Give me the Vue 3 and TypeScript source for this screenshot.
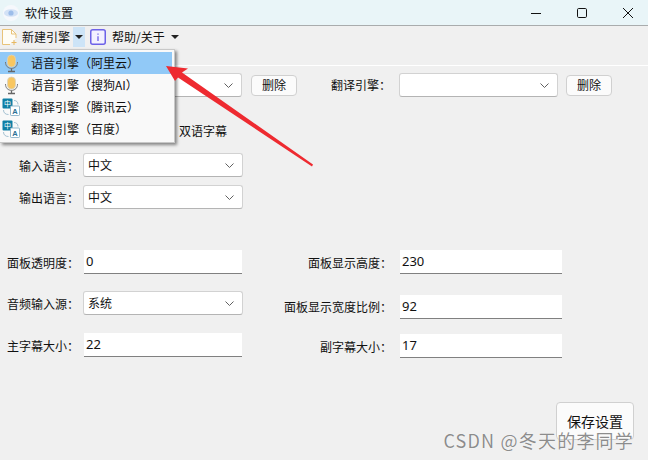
<script setup lang="ts">
const menu = [
  { text: '语音引擎（阿里云）', icon: 'mic', active: true },
  { text: '语音引擎（搜狗AI）', icon: 'mic', active: false },
  { text: '翻译引擎（腾讯云）', icon: 'tr', active: false },
  { text: '翻译引擎（百度）', icon: 'tr', active: false },
]
const leftRows = [
  { label: '面板透明度：', value: '0', type: 'input', cls: 'l1' },
  { label: '音频输入源：', value: '系统', type: 'select', cls: 'l2' },
  { label: '主字幕大小：', value: '22', type: 'input', cls: 'l3' },
]
const rightRows = [
  { label: '面板显示高度：', value: '230', cls: 'r1' },
  { label: '面板显示宽度比例：', value: '92', cls: 'r2' },
  { label: '副字幕大小：', value: '17', cls: 'r3' },
]
</script>

<template>
  <div class="window">
    <header class="titlebar">
      <svg class="appicon" width="18" height="18" viewBox="0 0 18 18">
        <circle cx="9" cy="9" r="8" fill="#f6f8fc" />
        <ellipse cx="9" cy="9" rx="7" ry="3.8" fill="#d3e2f6" />
        <circle cx="9" cy="9" r="2.6" fill="#9dbdea" />
      </svg>
      <span class="title">软件设置</span>
      <div class="controls">
        <svg width="12" height="12" viewBox="0 0 12 12"><path d="M1 6.5H11" stroke="#111" stroke-width="1" fill="none" /></svg>
        <svg width="12" height="12" viewBox="0 0 12 12"><rect x="1.5" y="1.5" width="9" height="9" rx="1.2" stroke="#111" stroke-width="1" fill="none" /></svg>
        <svg width="12" height="12" viewBox="0 0 12 12"><path d="M1 1L11 11M11 1L1 11" stroke="#111" stroke-width="1" fill="none" /></svg>
      </div>
    </header>

    <nav class="toolbar">
      <svg class="newicon" width="17" height="18" viewBox="0 0 17 18">
        <path d="M9 16.5H1.5V1.5H10.5L15 6V10" fill="#fffdf6" stroke="#e8c37a" stroke-width="1" />
        <path d="M10.5 1.5V6H15" fill="none" stroke="#e8c37a" stroke-width="1" />
        <path d="M13 12V17M10.5 14.5H15.5" stroke="#e8b860" stroke-width="1" fill="none" />
      </svg>
      <span class="tool-text new">新建引擎</span>
      <span class="drop active"><i class="caret"></i></span>
      <svg class="infoicon" width="16" height="16" viewBox="0 0 16 16">
        <rect x="0.75" y="0.75" width="14.5" height="14.5" rx="2" fill="#f3f1ff" stroke="#6d62e8" stroke-width="1.5" />
        <path d="M8 4.5V5.8M8 7.2V12" stroke="#6d62e8" stroke-width="1.3" fill="none" />
      </svg>
      <span class="tool-text help">帮助/关于</span>
      <i class="caret help-caret"></i>
    </nav>
    <div class="rule"></div>

    <main class="content">
      <section class="engines">
        <div class="select engine-sel"><span></span><svg class="chev" width="9" height="5" viewBox="0 0 9 5"><path d="M0.5 0.5L4.5 4.5L8.5 0.5" fill="none" stroke="#606060" /></svg></div>
        <button class="btn del del-a">删除</button>
        <label class="engine-label">翻译引擎：</label>
        <div class="select engine-sel"><span></span><svg class="chev" width="9" height="5" viewBox="0 0 9 5"><path d="M0.5 0.5L4.5 4.5L8.5 0.5" fill="none" stroke="#606060" /></svg></div>
        <button class="btn del">删除</button>
      </section>

      <div class="dual">双语字幕</div>

      <section class="langs">
        <div class="row">
          <label class="lbl">输入语言：</label>
          <div class="select"><span>中文</span><svg class="chev" width="9" height="5" viewBox="0 0 9 5"><path d="M0.5 0.5L4.5 4.5L8.5 0.5" fill="none" stroke="#606060" /></svg></div>
        </div>
        <div class="row">
          <label class="lbl">输出语言：</label>
          <div class="select"><span>中文</span><svg class="chev" width="9" height="5" viewBox="0 0 9 5"><path d="M0.5 0.5L4.5 4.5L8.5 0.5" fill="none" stroke="#606060" /></svg></div>
        </div>
      </section>

      <section class="panel">
        <div class="col left">
          <div v-for="r in leftRows" :key="r.label" class="row" :class="r.cls">
            <label class="lbl">{{ r.label }}</label>
            <div v-if="r.type === 'select'" class="select"><span>{{ r.value }}</span><svg class="chev" width="9" height="5" viewBox="0 0 9 5"><path d="M0.5 0.5L4.5 4.5L8.5 0.5" fill="none" stroke="#606060" /></svg></div>
            <div v-else class="input">{{ r.value }}</div>
          </div>
        </div>
        <div class="col right">
          <div v-for="r in rightRows" :key="r.label" class="row" :class="r.cls">
            <label class="lbl wide">{{ r.label }}</label>
            <div class="input">{{ r.value }}</div>
          </div>
        </div>
      </section>

      <div class="footer">
        <button class="btn save">保存设置</button>
      </div>
    </main>

    <ul class="menu">
      <li v-for="m in menu" :key="m.text" class="item" :class="{ on: m.active }">
        <svg v-if="m.icon === 'mic'" class="mi mic" width="16" height="20" viewBox="0 0 16 20">
          <rect x="3.5" y="2" width="8" height="12" rx="4" fill="#f8c660" stroke="#d9d2bd" stroke-width="0.8" />
          <path d="M1.5 9C1.5 13 4 15.4 7.5 15.4C11 15.4 13.5 13 13.5 9" fill="none" stroke="#777" stroke-width="1" />
          <path d="M7.5 15.4V18M4 18.5H11" stroke="#666" stroke-width="1.3" fill="none" />
        </svg>
        <svg v-else class="mi" width="18" height="18" viewBox="0 0 18 18">
          <rect x="0.5" y="0.5" width="10" height="10" rx="1" fill="#0f7fa5" />
          <text x="5.5" y="8.3" font-size="7" fill="#fff" text-anchor="middle" font-family="Noto Sans CJK SC">中</text>
          <rect x="8.5" y="8" width="9" height="9.5" rx="0.8" fill="#fff" stroke="#7aa7c0" stroke-width="0.8" />
          <text x="13" y="15.5" font-size="7.5" fill="#2b6f95" text-anchor="middle" font-family="Liberation Sans" font-weight="700">A</text>
          <path d="M12 2.5C14.5 2.5 16 4 16 6.5M1.5 12C1.5 15 3.5 16.5 6.5 16.5" fill="none" stroke="#8fb3c8" stroke-width="0.8" />
        </svg>
        <span class="item-text">{{ m.text }}</span>
      </li>
    </ul>

    <svg class="arrow" width="648" height="460" viewBox="0 0 648 460">
      <path d="M166 66L188 68.5L182 72.5L313 164.5L312 166.5L178 77.5L175 81Z" fill="#ee2a30" />
    </svg>

    <div class="watermark">CSDN @冬天的李同学</div>
  </div>
</template>

<style scoped>
.window {
  position: relative;
  width: 648px;
  height: 460px;
  overflow: hidden;
  background: #f0f0f0;
  color: #111;
  font-family: "Noto Sans CJK SC", "Noto Sans", sans-serif;
  font-size: 12px;
  line-height: 16px;
}
.titlebar {
  display: flex;
  align-items: center;
  height: 25px;
  padding-left: 2px;
  background: #e9f5f8;
  border-bottom: 1px solid #a9acad;
}
.title { margin-left: 5px; }
.controls {
  display: flex;
  gap: 34px;
  margin-left: auto;
  margin-right: 14px;
}
.toolbar {
  display: flex;
  align-items: center;
  height: 39px;
  padding: 1px 0 18px 1px;
  box-sizing: border-box;
  background: #f0f0f0;
}
.tool-text { font-size: 12px; }
.new { margin-left: 4px; }
.drop {
  display: flex;
  align-items: center;
  justify-content: center;
  width: 12px;
  height: 20px;
  margin-left: 3px;
}
.active { background: #cde4f7; }
.caret {
  display: block;
  width: 0;
  height: 0;
  border-left: 4px solid transparent;
  border-right: 4px solid transparent;
  border-top: 4px solid #222;
}
.infoicon { margin-left: 5px; }
.help { margin-left: 6px; }
.help-caret { margin-left: 6px; }
.rule {
  height: 1px;
  background: #fff;
}
.content {
  display: flex;
  flex-direction: column;
  padding-top: 7px;
}
.engines {
  display: flex;
  align-items: center;
  height: 24px;
  padding-left: 83px;
}
.select {
  display: flex;
  align-items: center;
  justify-content: space-between;
  box-sizing: border-box;
  width: 160px;
  height: 24px;
  padding: 0 8px 0 4px;
  background: #fff;
  border: 1px solid #d2d2d2;
  border-bottom-color: #b4b4b4;
  border-radius: 3px;
}
.engine-sel { width: 159px; }
.btn {
  box-sizing: border-box;
  padding: 0;
  background: #fbfbfb;
  border: 1px solid #d0d0d0;
  border-radius: 4px;
  color: #111;
  font-family: inherit;
}
.del {
  width: 46px;
  height: 21px;
  margin-left: 8px;
  font-size: 12px;
  line-height: 16px;
}
.del-a { margin-left: 9px; }
.engine-label {
  width: 60px;
  margin-left: 34px;
  margin-right: 8px;
  white-space: nowrap;
}
.dual {
  height: 16px;
  margin-top: 26px;
  margin-left: 179px;
}
.langs {
  display: flex;
  flex-direction: column;
  gap: 8px;
  margin-top: 14px;
}
.row {
  display: flex;
  align-items: center;
}
.lbl {
  flex: none;
  width: 79px;
  margin-right: 4px;
  padding-top: 2px;
  text-align: right;
  white-space: nowrap;
}
.wide { width: 112px; margin-right: 8px; }
.r2 .lbl { padding-top: 0; }
.panel {
  display: flex;
  margin-top: 41px;
}
.col {
  display: flex;
  flex-direction: column;
}
.left { width: 280px; }
.l2 { margin-top: 17px; }
.l3 { margin-top: 18px; }
.r2 { margin-top: 21px; }
.r3 { margin-top: 15px; }
.input {
  box-sizing: border-box;
  width: 159px;
  height: 24px;
  padding: 2px 2px 0;
  background: #fff;
  border-bottom: 1px solid #808080;
  font-family: "Noto Sans", sans-serif;
  font-size: 13px;
  line-height: 18px;
}
.left .input { width: 158px; margin-left: 1px; }
.right .input { width: 162px; }
.footer {
  display: flex;
  justify-content: flex-end;
  margin-top: 44px;
  padding-right: 14px;
}
.save {
  width: 78px;
  height: 38px;
  font-size: 14px;
  line-height: 34px;
}
.menu {
  position: absolute;
  top: 49px;
  left: 0;
  width: 175px;
  height: 94px;
  box-sizing: border-box;
  margin: 0;
  padding: 2px 2px 0 0;
  list-style: none;
  background: #f9f9f9;
  border: 1px solid #c8c8c8;
  border-left: 0;
  box-shadow: 2px 2px 3px rgba(0, 0, 0, 0.45);
}
.item {
  display: flex;
  align-items: center;
  height: 22px;
  padding-left: 2px;
}
.item.on { background: #91c9f7; }
.mi { flex: none; }
.mic { margin-left: 2px; }
.item-text { position: absolute; left: 31px; }
.arrow {
  position: absolute;
  top: 0;
  left: 0;
  pointer-events: none;
}
.watermark {
  position: absolute;
  top: 428px;
  right: 14px;
  color: rgba(120, 120, 120, 0.85);
  font-size: 18px;
  line-height: 24px;
  letter-spacing: 1.2px;
  white-space: nowrap;
  text-shadow: 0 0 1px #fff;
}
</style>
